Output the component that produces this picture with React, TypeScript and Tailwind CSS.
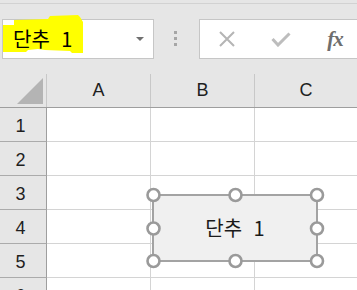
import React from "react";

const cols = ["A", "B", "C"];
const rows = [1, 2, 3, 4, 5, 6];

export default function App() {
  return (
    <div className="relative w-[357px] h-[290px] overflow-hidden bg-[#e6e6e6] font-['Noto_Sans','Noto_Sans_CJK_KR',sans-serif]">
      {/* top strip */}
      <div className="h-[4px] border-b border-[#d2d2d2]" />
      {/* formula bar */}
      <div className="h-[70px] flex items-start pt-[15px]">
        <div className="relative ml-[2px] w-[152px] h-[40px] shrink-0 bg-white border border-[#c6c6c6] flex items-center">
          <svg width="84" height="34" className="absolute left-0 top-0 overflow-visible">
            <polygon
              fill="#ffff00"
              points="0,5 11,5 11,0 45,-1 47,-4 75,-5 77,-3 80,2 80,33 69,33 67,31 42,30 35,29 25,30 23,32 0,32"
            />
          </svg>
          <span className="relative pl-[10px] text-[20px] leading-none text-black font-['Noto_Sans_CJK_KR',sans-serif] [word-spacing:7px]">
            단추 1
          </span>
          <div className="ml-auto mr-[9px] w-0 h-0 border-l-[4px] border-r-[4px] border-t-[4px] border-l-transparent border-r-transparent border-t-[#707070]" />
        </div>
        <div className="w-[45px] shrink-0 pl-[20px] pt-[12px] flex flex-col gap-[3px]">
          <div className="w-[3px] h-[3px] bg-[#a6a6a6]" />
          <div className="w-[3px] h-[3px] bg-[#a6a6a6]" />
          <div className="w-[3px] h-[3px] bg-[#a6a6a6]" />
        </div>
        <div className="w-[170px] h-[40px] shrink-0 bg-white border border-[#c6c6c6] flex items-center">
          <div className="w-[54px] flex justify-center">
            <svg width="16" height="16" viewBox="0 0 16 16">
              <path d="M1 1 L15 15 M15 1 L1 15" stroke="#b5b5b5" strokeWidth="2" fill="none" />
            </svg>
          </div>
          <div className="w-[54px] flex justify-center">
            <svg width="20" height="15" viewBox="0 0 20 15">
              <path d="M1.5 7 L7 13 L18.5 1.5" stroke="#bdbdbd" strokeWidth="3" fill="none" />
            </svg>
          </div>
          <div className="w-[54px] flex justify-center">
            <span className="font-['Liberation_Serif',serif] italic text-[21px] leading-none text-[#6e6e6e] font-bold tracking-[-1px]">
              fx
            </span>
          </div>
        </div>
      </div>
      {/* header row */}
      <div className="flex h-[34px] border-b border-[#9e9e9e] font-['Liberation_Sans',sans-serif] text-[18px] text-[#1f1f1f]">
        <div className="w-[47px] shrink-0 border-r border-[#c8c8c8] relative">
          <svg width="27" height="26" className="absolute left-[17px] top-[4px]">
            <polygon points="26,0 26,26 0,26" fill="#b4b4b4" />
          </svg>
        </div>
        {cols.map((c, i) => (
          <div
            key={c}
            className={
              i < 2
                ? "w-[104px] shrink-0 border-r border-[#c8c8c8] flex items-center justify-center"
                : "flex-1 flex items-center justify-center"
            }
          >
            {c}
          </div>
        ))}
      </div>
      {/* body rows */}
      {rows.map((r) => (
        <div key={r} className="flex h-[34px] font-['Liberation_Sans',sans-serif] text-[18px] text-[#1f1f1f]">
          <div className="w-[47px] shrink-0 border-r border-b border-r-[#9e9e9e] border-b-[#ababab] flex items-center justify-center pr-[5px] pt-[4px]">
            {r}
          </div>
          <div className="w-[104px] shrink-0 bg-white border-r border-b border-[#d4d4d4]" />
          <div className="w-[104px] shrink-0 bg-white border-r border-b border-[#d4d4d4]" />
          <div className="flex-1 bg-white border-b border-[#d4d4d4]" />
        </div>
      ))}
      {/* form button */}
      <div className="absolute left-[152px] top-[194px] w-[166px] h-[68px] bg-[#f0f0f0] border-2 border-[#a3a3a3] flex items-center justify-center">
        <span className="text-[20px] leading-none text-[#1a1a1a] font-['Noto_Sans_CJK_KR',sans-serif] [word-spacing:7px]">단추 1</span>
      </div>
      <svg width="190" height="92" className="absolute left-[140px] top-[182px]">
        {[
          [13.5, 13],
          [95.5, 13],
          [177, 13],
          [13.5, 46.5],
          [177, 46.5],
          [13.5, 79],
          [95.5, 79],
          [177, 79],
        ].map(([cx, cy], i) => (
          <circle key={i} cx={cx} cy={cy} r={6} fill="#ffffff" stroke="#9a9a9a" strokeWidth={2.6} />
        ))}
      </svg>
    </div>
  );
}
